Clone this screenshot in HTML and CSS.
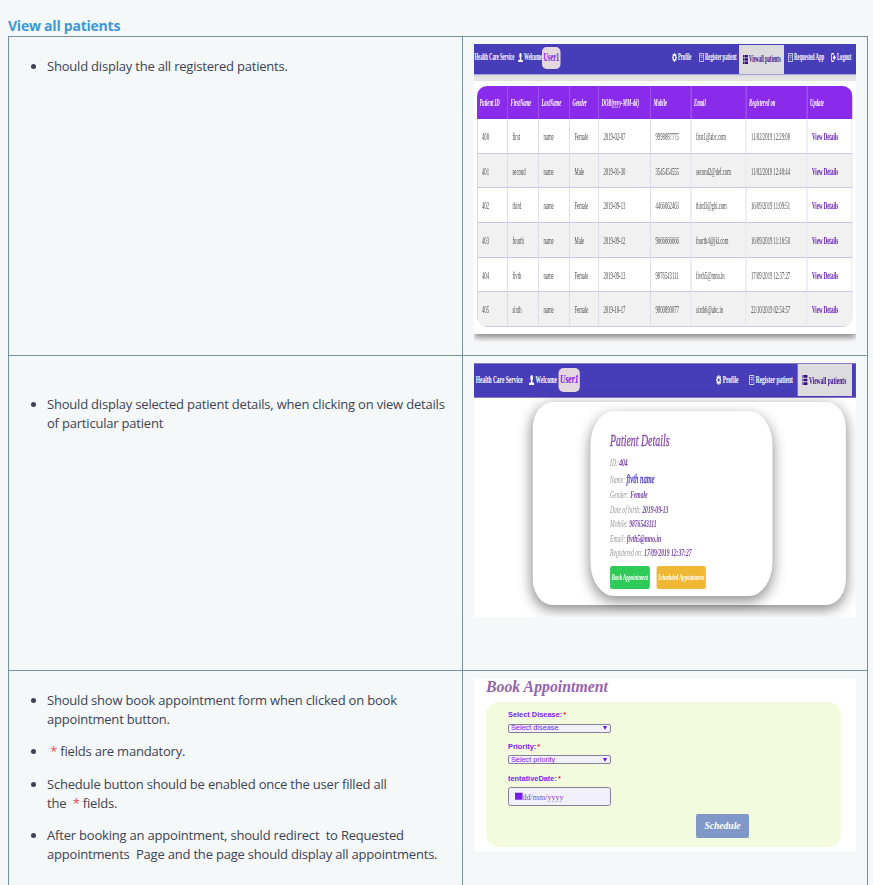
FILE: index.html
```html
<!DOCTYPE html>
<html lang="en">
<head>
<meta charset="utf-8">
<title>View all patients</title>
<link rel="stylesheet" href="styles.css">
</head>
<body>
<svg class="defs" viewBox="0 0 12 12">
  <symbol id="i-user" viewBox="0 0 12 12" preserveAspectRatio="none"><path d="M6 0C2.500 0 2.500 5 4.500 6.500V8.500L0 10V12H12V10L7.500 8.500V6.500C9.500 5 9.500 0 6 0Z" fill="currentColor"/></symbol>
  <symbol id="i-gear" viewBox="0 0 12 12" preserveAspectRatio="none"><circle cx="6" cy="6" r="3.400" fill="none" stroke="currentColor" stroke-width="2.400"/><path d="M6 0V2M6 10V12M0 6H2M10 6H12M1.800 1.800 3 3M9 9 10.200 10.200M1.800 10.200 3 9M9 3 10.200 1.800" stroke="currentColor" stroke-width="2"/></symbol>
  <symbol id="i-form" viewBox="0 0 12 12" preserveAspectRatio="none"><path d="M1 .600H11V11.400H1ZM3.500 3.200H8.500M3.500 5.500H8.500M5 8.500H7" fill="none" stroke="currentColor" stroke-width="1.200"/></symbol>
  <symbol id="i-list" viewBox="0 0 12 12" preserveAspectRatio="none"><path d="M0 0H3V3.200H0ZM4 0H12V3.200H4ZM0 4.400H3V7.600H0ZM4 4.400H12V7.600H4ZM0 8.800H3V12H0ZM4 8.800H12V12H4Z" fill="currentColor"/></symbol>
  <symbol id="i-out" viewBox="0 0 12 12" preserveAspectRatio="none"><path d="M7 1H3Q1 1 1 3V9Q1 11 3 11H7" fill="none" stroke="currentColor" stroke-width="1.800"/><path d="M4.500 4.500H7V2L12 6 7 10V7.500H4.500Z" fill="currentColor"/></symbol>
</svg>
<h3 class="heading">View all patients</h3>
<div class="doc">
  <div class="cell"><ul><li>Should display the all registered patients.</li></ul></div>
  <div class="cell media">
    <div class="frame frame-list"><div class="screen list">
      <div class="nav">
        <span class="brand">Health Care Service</span>
        <span class="item welcome"><svg><use href="#i-user"/></svg>Welcome</span>
        <span class="badge">User1</span>
        <span class="item profile"><svg><use href="#i-gear"/></svg>Profile</span>
        <span class="item register"><svg><use href="#i-form"/></svg>Register patient</span>
        <span class="item active"><svg><use href="#i-list"/></svg>Viewall patients</span>
        <span class="item requested"><svg><use href="#i-form"/></svg>Requested App</span>
        <span class="item logout"><svg><use href="#i-out"/></svg>Logout</span>
      </div>
      <div class="sheet">
        <table>
          <colgroup><col class="c1"><col class="c2"><col class="c3"><col class="c4"><col class="c5"><col class="c6"><col class="c7"><col class="c8"><col class="c9"></colgroup>
          <thead><tr><th>Patient ID</th><th>FirstName</th><th>LastName</th><th>Gender</th><th>DOB(yyyy-MM-dd)</th><th>Mobile</th><th>Email</th><th>Registered on</th><th>Update</th></tr></thead>
          <tbody>
            <tr><td>400</td><td>first</td><td>name</td><td>Female</td><td>2019-02-07</td><td>9998887775</td><td>first1@abc.com</td><td>11/02/2019 12:29:08</td><td><b>View Details</b></td></tr>
            <tr><td>401</td><td>second</td><td>name</td><td>Male</td><td>2019-01-30</td><td>3545454555</td><td>second2@def.com</td><td>11/02/2019 12:40:44</td><td><b>View Details</b></td></tr>
            <tr><td>402</td><td>third</td><td>name</td><td>Female</td><td>2019-09-13</td><td>4466062463</td><td>third3@ghi.com</td><td>16/09/2019 11:09:51</td><td><b>View Details</b></td></tr>
            <tr><td>403</td><td>fourth</td><td>name</td><td>Male</td><td>2019-09-12</td><td>9666666666</td><td>fourth4@jkl.com</td><td>16/09/2019 11:16:50</td><td><b>View Details</b></td></tr>
            <tr><td>404</td><td>fivth</td><td>name</td><td>Female</td><td>2019-09-13</td><td>9876543111</td><td>fivth5@mno.in</td><td>17/09/2019 12:37:27</td><td><b>View Details</b></td></tr>
            <tr><td>405</td><td>sixth</td><td>name</td><td>Female</td><td>2019-10-17</td><td>9800890077</td><td>sixth6@abc.in</td><td>22/10/2019 02:54:57</td><td><b>View Details</b></td></tr>
          </tbody>
        </table>
      </div>
    </div></div>
  </div>

  <div class="cell second"><ul><li>Should display selected patient details, when clicking on view details of particular patient</li></ul></div>
  <div class="cell media">
    <div class="frame frame-detail"><div class="screen detail">
      <div class="nav">
        <span class="brand">Health Care Service</span>
        <span class="item welcome"><svg><use href="#i-user"/></svg>Welcome</span>
        <span class="badge">User1</span>
        <span class="item profile"><svg><use href="#i-gear"/></svg>Profile</span>
        <span class="item register"><svg><use href="#i-form"/></svg>Register patient</span>
        <span class="item active"><svg><use href="#i-list"/></svg>Viewall patients</span>
      </div>
      <div class="outer"><div class="inner">
        <h4>Patient Details</h4>
        <p>ID: <b>404</b></p>
        <p class="name">Name: <b>fivth name</b></p>
        <p>Gender: <b>Female</b></p>
        <p>Date of birth: <b>2019-09-13</b></p>
        <p>Mobile: <b>9876543111</b></p>
        <p>Email: <b>fivth5@mno.in</b></p>
        <p>Registered on: <b>17/09/2019 12:37:27</b></p>
        <div class="actions"><span class="btn green">Book Appointment</span><span class="btn amber">Scheduled Appointment</span></div>
      </div></div>
    </div></div>
  </div>

  <div class="cell"><ul>
    <li>Should show book appointment form when clicked on book appointment button.</li>
    <li>&nbsp;<i class="req">*</i> fields are mandatory.</li>
    <li>Schedule button should be enabled once the user filled all the&nbsp;&nbsp;<i class="req">*</i>&nbsp;fields.</li>
    <li>After booking an appointment, should redirect&nbsp; to Requested appointments&nbsp; Page and the page should display all appointments.</li>
  </ul></div>
  <div class="cell media third">
    <div class="frame frame-book">
      <h4 class="book-title">Book Appointment</h4>
      <div class="panel">
        <div class="label">Select Disease:<i>*</i></div>
        <div class="select">Select disease<span class="arrow"></span></div>
        <div class="label">Priority:<i>*</i></div>
        <div class="select">Select priority<span class="arrow"></span></div>
        <div class="label">tentativeDate:<i>*</i></div>
        <div class="date"><svg viewBox="0 0 8 8"><path d="M0 .500H8V8H0Z" fill="#7a1cf5"/><path d="M0 2.300H8" stroke="#5a10d0" stroke-width=".5"/></svg>dd/mm/yyyy</div>
        <div class="schedule">Schedule</div>
      </div>
    </div>
  </div>
</div>
</body>
</html>
```
FILE: styles.css
```css
* { box-sizing: border-box; }
html, body { height: 885px; overflow: hidden; }
body {
  margin: 0;
  padding: 16px 0 0 8px;
  background: #f4f8f9;
  color: #3d4255;
  font: 13px/19px "Open Sans", sans-serif;
}
.defs { position: absolute; width: 0; height: 0; }
.heading { margin: 0; height: 20px; font-size: 14px; line-height: 20px; font-weight: 700; letter-spacing: -.23px; color: #3a98dc; }

.doc {
  display: grid;
  grid-template-columns: 454px 405px;
  grid-template-rows: 319px 315px 240px;
  width: 860px;
  border: solid #78909c;
  border-width: 1px 0 0 1px;
}
.cell { border: solid #78909c; border-width: 0 1px 1px 0; padding-top: 20px; }
.cell.second { padding-top: 39px; }
.cell.media { padding: 7px 0 0 11px; }
.cell.third { padding-top: 8px; }
ul { margin: 0; padding: 0 13px 0 38px; letter-spacing: -.2px; }
li { margin-bottom: 13.4px; }
.req { font-style: normal; color: #f4455a; }

/* Screens are laid out wide and squeezed horizontally into their frames */
.frame { width: 382px; overflow: hidden; background: #fff; font-family: "Liberation Serif", serif; }
.frame-list { height: 298px; }
.frame-detail { height: 254px; }
.frame-book { height: 172px; }
.screen { transform-origin: 0 0; white-space: nowrap; }
.list { width: 764px; height: 298px; transform: scaleX(.5); }
.detail { width: 682px; height: 254px; transform: scaleX(.56); }

.nav { display: flex; align-items: center; background: #483db8; color: #fff; font-weight: 700; }
.nav > span { flex: none; }
.item { display: flex; align-items: center; }
.item svg { flex: none; width: 10px; height: 9px; margin-right: 2px; }
.badge { display: flex; align-items: center; justify-content: center; background: #e4d7dd; color: #7a12ee; border-radius: 9px / 5px; }
.active { background: #dcdcdf; color: #3d0a86; }

.list .nav { height: 31px; padding-bottom: 3px; font-size: 9.3px; border-bottom: 1px solid #a9a2df; }
.list .brand { width: 88px; padding-left: 1px; }
.list .welcome { width: 48px; }
.list .badge { width: 37px; height: 22px; padding-bottom: 1px; font-size: 12.500px; }
.list .profile { width: 54px; margin-left: 223px; }
.list .register { width: 80px; }
.list .active { width: 90px; height: 29px; padding-left: 8px; margin: 1px 8px 0 0; position: relative; top: 1px; }
.list .requested { width: 86px; }
.list .logout { width: 50px; }

.list { background: linear-gradient(#d9d9d9, #ececec 5px) 0 31px / 100% 6px no-repeat; }
.sheet { height: 253px; margin-top: 6px; padding: 5px 7px 0 6px; background: #fff; box-shadow: 0 4px 9px rgba(0,0,0,.45); }
table { width: 751px; table-layout: fixed; border-collapse: separate; border-spacing: 0; border-radius: 20px / 10px; overflow: hidden; }
.c1 { width: 62px; } .c2 { width: 62px; } .c3 { width: 62px; } .c4 { width: 58px; } .c5 { width: 104px; }
.c6 { width: 81px; } .c7 { width: 110px; } .c8 { width: 122px; } .c9 { width: 90px; }
th { height: 33px; padding: 0 0 0 5px; background: #8a2aea; color: #fff; text-align: left; font: italic 700 9.4px/12px "Liberation Serif", serif; border-right: 2px solid #9b50ec; }
td { height: 34.7px; padding: 2px 0 0 9px; color: #4c4c4c; font-size: 9.4px; line-height: 12px; border-right: 2px solid #e0dcee; border-bottom: 1.500px solid #cbc7e2; }
td:first-child { padding-left: 8px; border-left: 2px solid #dcd8ec; }
th:last-child { border-right: 0; }
tr:nth-child(even) td { background: #f1f1f1; }
td b { color: #5c12b4; font-size: 9.8px; }

.detail .nav { height: 35px; font-size: 9.8px; border: solid #8d78cc; border-width: 1px 0; padding-bottom: 2px; }
.detail .brand { width: 98px; padding-left: 3px; }
.detail .welcome { width: 53px; }
.detail .item svg { height: 10px; }
.detail .badge { width: 38px; height: 24px; padding-bottom: 2px; font-size: 13.5px; font-style: italic; }
.detail .profile { width: 59px; margin-left: 243px; }
.detail .register { width: 87px; }
.detail .active { width: 97px; height: 32px; padding-left: 8px; margin-top: 1px; }
.outer { width: 559px; height: 203px; margin: 3.500px 0 0 105px; padding: 9px 0 0 103px; border-radius: 35px / 26px; background: #fff; box-shadow: 0 4px 18px rgba(0,0,0,.5); }
.inner { width: 325px; height: 185px; padding: 18px 0 0 35px; border-radius: 42px / 34px; background: #fff; box-shadow: 0 5px 18px rgba(0,0,0,.45); font-style: italic; color: #9d9499; }
.inner h4 { margin: 0 0 5.500px; font-size: 17.6px; line-height: 22px; font-weight: 400; color: #8548a8; -webkit-text-stroke: .3px #8548a8; }
.inner p { margin: 0; font-size: 10px; line-height: 14.500px; }
.inner p b { color: #7540a8; }
.inner p.name { line-height: 17.500px; }
.inner p.name b { font-size: 12px; font-weight: 400; color: #4932b8; -webkit-text-stroke: .3px #4932b8; }
.actions { display: flex; gap: 12px; margin-top: 5px; }
.btn { display: flex; align-items: center; justify-content: center; height: 23px; border-radius: 4px / 2px; color: #fff; font-size: 8.400px; font-weight: 700; }
.green { width: 71px; background: #2fcb58; }
.amber { width: 88px; background: #efb734; }

.book-title { margin: 0 0 0 12px; height: 23px; font: italic 700 15.8px/16px "Liberation Serif", serif; color: #9264b0; }
.panel { width: 355px; height: 145px; margin-left: 12px; padding: 7px 0 0 22px; border-radius: 13px; background: #f2fbdd; }
.label { height: 14.500px; font: 700 7.400px/11px "Liberation Sans", sans-serif; color: #7a1cf5; }
.label i { margin-left: 1px; font-style: normal; color: #f21a1a; }
.select { display: flex; align-items: center; justify-content: space-between; width: 103px; height: 9px; margin-bottom: 8.300px; padding: 0 3px 0 2px; border: 1px solid #85809a; border-radius: 2px; background: #f2f0fa; color: #7a1cf5; font: 7.300px/8px "Liberation Sans", sans-serif; }
.arrow { border: solid transparent; border-width: 4px 2px 0; border-top-color: #6a10e8; }
.date { display: flex; align-items: center; width: 103px; height: 19px; padding: 1px 0 0 6px; border: 1px solid #85809a; border-radius: 2.500px; background: #f2f0fa; color: #7a4cc8; font-size: 8px; }
.date svg { width: 7.500px; height: 8px; margin-top: -2px; }
.schedule { width: 53px; height: 24px; margin: 8px 0 0 188px; border-radius: 2px; background: #8098c8; color: #fff; text-align: center; font: italic 700 9.6px/23px "Liberation Serif", serif; }
```
